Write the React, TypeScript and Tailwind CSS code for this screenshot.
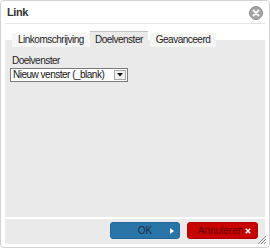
import React from 'react';

const font = { fontFamily: '"Liberation Sans", Arial, sans-serif' };

const tabs = [
    { name: 'Linkomschrijving', active: false },
    { name: 'Doelvenster', active: true },
    { name: 'Geavanceerd', active: false },
];

export default function App() {
    return (
        <div style={font} className="relative w-[270px] h-[248px] bg-white border border-[#d2d2d2] rounded-[4px] flex flex-col text-[#222]">
            {/* header */}
            <div className="h-[22px] flex items-center justify-between pl-[6px] pr-[6px]">
                <span className="text-[11px] font-bold tracking-[-0.4px] text-[#333]">Link</span>
                <span className="w-[14px] h-[14px] rounded-full bg-[#a4a4a4] border border-[#8f8f8f] flex items-center justify-center mt-[1px]">
                    <svg width="8" height="8" viewBox="0 0 8 8">
                        <path d="M1.5 1.5 L6.5 6.5 M6.5 1.5 L1.5 6.5" stroke="white" strokeWidth="1.8" strokeLinecap="round" />
                    </svg>
                </span>
            </div>
            <div className="mx-[4px] h-px bg-[#e6e6e6]" />

            {/* tabs + panel */}
            <div className="mt-[7px] mx-[4px] h-[186px] bg-[linear-gradient(to_bottom,#ffffff_9px,#eaeaea_9px)] flex flex-col">
                <div className="flex items-start pl-[7px] h-[16px]">
                    {tabs.map(t =>
                        t.active ? (
                            <div key={t.name} className="h-[16px] px-[5px] bg-[#eaeaea] border-t border-[#c4c4c4] text-[10px] tracking-[-0.5px] leading-[15px] mr-[2px]">
                                {t.name}
                            </div>
                        ) : (
                            <div key={t.name} className="mt-[2px] h-[14px] px-[6px] bg-[#f6f6f6] text-[10px] tracking-[-0.5px] leading-[14px]">
                                {t.name}
                            </div>
                        )
                    )}
                </div>
                <div className="pl-[7px] mt-[8px] text-[10px] tracking-[-0.5px] leading-[12px]">Doelvenster</div>
                <div className="ml-[5px] mt-[1px] w-[118px] h-[14px] bg-white border border-[#7b7b7b] flex items-center justify-between pl-[2px] pr-[1px]">
                    <span className="text-[10px] tracking-[-0.5px] leading-[12px] text-[#111]">Nieuw venster (_blank)</span>
                    <span className="w-[12px] h-[10px] bg-[#f0f0f0] border border-[#a9a9a9] flex items-center justify-center">
                        <svg width="6" height="4" viewBox="0 0 6 4">
                            <path d="M0 0 L6 0 L3 3.5 Z" fill="#111" />
                        </svg>
                    </span>
                </div>
            </div>

            {/* footer */}
            <div className="mt-[2px] mx-[4px] h-[25px] bg-[#eaeaea] flex justify-end items-start pt-[3px] pr-[7px] gap-[7px]">
                <button className="relative w-[70px] h-[17px] rounded-[3px] bg-[#2a75a8] border border-[#24679a] text-[10px] text-[#1a2f44] leading-[15px]">
                    OK
                    <svg className="absolute right-[5px] top-[5px]" width="4" height="6" viewBox="0 0 4 6">
                        <path d="M0 0 L4 3 L0 6 Z" fill="white" />
                    </svg>
                </button>
                <button className="relative w-[71px] h-[17px] rounded-[3px] bg-[#c90000] border border-[#b00000] text-[10px] text-[#650000] leading-[15px] pr-[4px]">
                    Annuleren
                    <svg className="absolute right-[6px] top-[5px]" width="6" height="6" viewBox="0 0 6 6">
                        <path d="M0.8 0.8 L5.2 5.2 M5.2 0.8 L0.8 5.2" stroke="white" strokeWidth="1.5" />
                    </svg>
                </button>
            </div>

            {/* resize grip */}
            <svg className="absolute right-[3px] bottom-[3px]" width="9" height="9" viewBox="0 0 9 9">
                <path d="M9 1 L1 9 M9 4 L4 9 M9 7 L7 9" stroke="#777" strokeWidth="0.8" />
            </svg>
        </div>
    );
}
